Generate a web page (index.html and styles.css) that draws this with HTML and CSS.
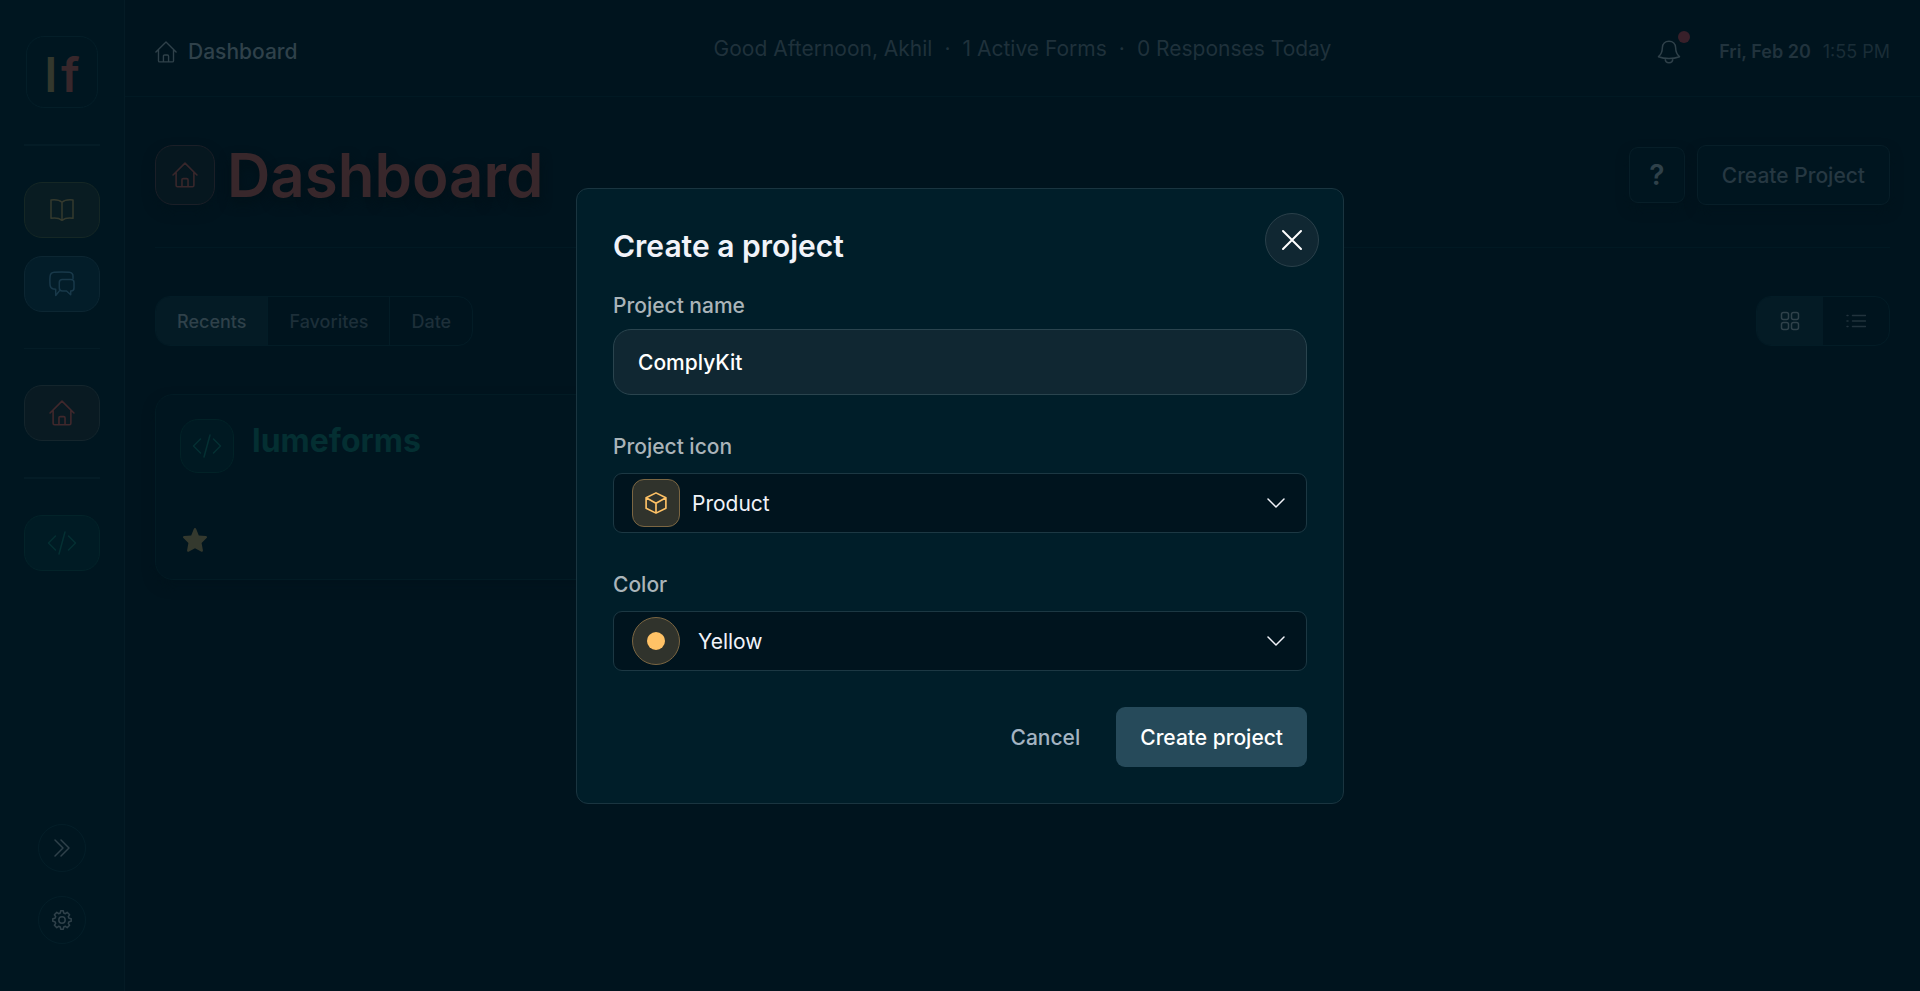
FILE: index.html
```html
<!DOCTYPE html>
<html lang="en">
<head>
    <meta charset="UTF-8">
    <meta name="viewport" content="width=device-width, initial-scale=1.0">
    <title>Dashboard</title>
    <link rel="stylesheet" href="styles.css">
</head>
<body>

    <!-- Shared icons -->
    <svg class="sprite" aria-hidden="true">
        <symbol id="i-home" viewBox="0 0 24 24">
            <path d="M1 12 12 1l11 11M3.800 9.800v11.700c0 .9.500 1.300 1.300 1.300h13.800c.8 0 1.300-.4 1.300-1.300V9.800M9.200 22.800v-6.200c0-.9.400-1.300 1.300-1.300h3c.9 0 1.300.4 1.300 1.300v6.200"/>
        </symbol>
        <symbol id="i-book" viewBox="0 0 24 24">
            <path d="M12 4.300C9.500 2 5.500 1.500 1 2v18.300c4.500-.6 8.500 0 11 2 2.500-2 6.500-2.600 11-2V2c-4.500-.5-8.500 0-11 2.300zM12 4.300v18"/>
        </symbol>
        <symbol id="i-chat" viewBox="0 0 26 26">
            <path d="M24 7.500V5.300c0-2.500-1.500-3.800-3.800-4C15.500.9 9.800.9 5.200 1.300 2.600 1.500 1.300 3 1.100 5.200c-.3 3.200-.3 6.300 0 9.200.2 2 1.500 3.200 3.400 3.500l2.200.3v6.300l4.300-5.400"/>
            <path d="M13.300 8.500h8.700c1.900 0 3 1.200 3 3v5.500c0 2-1.100 3-3 3h-.300v3.800L17.500 20h-4.200c-1.900 0-3-1-3-3v-5.500c0-1.800 1.100-3 3-3z"/>
        </symbol>
        <symbol id="i-code" viewBox="0 0 30 24">
            <path d="M8.500 5 1.500 12l7 7M21.500 5l7 7-7 7M18 1l-6 22"/>
        </symbol>
        <symbol id="i-chevron" viewBox="0 0 20 20">
            <path d="m2 6 8 8 8-8"/>
        </symbol>
    </svg>

    <div class="app">
        <nav class="sidebar" aria-label="Main">
            <a class="logo" href="#"><span class="logo-l">l</span><span class="logo-f">f</span></a>
            <div class="divider thick"></div>
            <div class="nav-group">
                <a class="nav-item guide" href="#" aria-label="Guide"><svg class="icon"><use href="#i-book"/></svg></a>
                <a class="nav-item chat" href="#" aria-label="Chat"><svg class="icon icon-lg"><use href="#i-chat"/></svg></a>
            </div>
            <div class="divider"></div>
            <a class="nav-item home" href="#" aria-label="Home"><svg class="icon icon-lg"><use href="#i-home"/></svg></a>
            <div class="divider thick"></div>
            <a class="nav-item project" href="#" aria-label="lumeforms"><svg class="icon icon-code"><use href="#i-code"/></svg></a>
            <div class="sidebar-bottom">
                <button class="round-btn" type="button" aria-label="Expand">
                    <svg class="icon-sm" viewBox="0 0 20 20"><path d="m3 2 8 8-8 8M9 2l8 8-8 8"/></svg>
                </button>
                <button class="round-btn" type="button" aria-label="Settings">
                    <svg class="icon-sm" viewBox="0 0 20 20"><path d="M8.300 3 8.700.8h2.600l.4 2.200 1.700.7L15.200 2.400l2.400 2.400-1.300 1.800.7 1.700 2.200.4v2.600l-2.200.4-.7 1.700 1.300 1.800-2.400 2.400-1.800-1.300-1.700.7-.4 2.200H8.700l-.4-2.200-1.700-.7-1.800 1.300-2.400-2.400 1.300-1.800-.7-1.700-2.200-.4V8.700l2.200-.4.7-1.700-1.300-1.800 2.400-2.400 1.800 1.300z"/><circle cx="10" cy="10" r="3.200"/></svg>
                </button>
            </div>
        </nav>

        <div class="main">
            <header class="topbar">
                <div class="crumb">
                    <svg class="icon-crumb"><use href="#i-home"/></svg>
                    <span>Dashboard</span>
                </div>
                <div class="greeting">
                    <span>Good Afternoon, Akhil</span><span>·</span><span>1 Active Forms</span><span>·</span><span>0 Responses Today</span>
                </div>
                <div class="topbar-right">
                    <button class="bell" type="button" aria-label="Notifications">
                        <svg class="icon" viewBox="0 0 24 24"><path d="M12 1.200c-4 0-6.500 2.800-6.600 6.300-.1 4-.9 6.700-3.900 9.200 3.200 1.200 6.800 1.800 10.500 1.800s7.300-.6 10.500-1.800c-3-2.500-3.800-5.200-3.900-9.200-.1-3.500-2.600-6.300-6.600-6.300zM8.200 18.500c0 2.700 1.500 4.300 3.800 4.300s3.800-1.600 3.800-4.300"/></svg>
                        <span class="bell-dot"></span>
                    </button>
                    <div class="datetime">
                        <span class="date">Fri, Feb 20</span>
                        <span class="time">1:55 PM</span>
                    </div>
                </div>
            </header>

            <main class="content">
                <div class="page-head">
                    <div class="page-title">
                        <span class="title-icon"><svg class="icon icon-lg"><use href="#i-home"/></svg></span>
                        <h1>Dashboard</h1>
                    </div>
                    <div class="page-actions">
                        <button class="help-btn" type="button">?</button>
                        <button class="create-btn" type="button">Create Project</button>
                    </div>
                </div>

                <div class="toolbar">
                    <div class="tabs">
                        <button class="tab active" type="button">Recents</button>
                        <button class="tab" type="button">Favorites</button>
                        <button class="tab" type="button">Date</button>
                    </div>
                    <div class="view-toggle">
                        <button class="view active" type="button" aria-label="Grid view">
                            <svg class="icon-sm" viewBox="0 0 20 20"><rect x="1.500" y="1.500" width="7" height="7" rx="2"/><rect x="11.500" y="1.500" width="7" height="7" rx="2"/><rect x="1.500" y="11.500" width="7" height="7" rx="2"/><rect x="11.500" y="11.500" width="7" height="7" rx="2"/></svg>
                        </button>
                        <button class="view" type="button" aria-label="List view">
                            <svg class="icon-sm" viewBox="0 0 20 20"><path d="M6.500 4.500h13M6.500 10h13M6.500 15.500h13M1 4.500h1M1 10h1M1 15.500h1"/></svg>
                        </button>
                    </div>
                </div>

                <div class="projects">
                    <article class="card">
                        <div class="card-head">
                            <span class="card-icon"><svg class="icon icon-code"><use href="#i-code"/></svg></span>
                            <h2>lumeforms</h2>
                        </div>
                        <button class="star" type="button" aria-label="Favorite">
                            <svg viewBox="0 0 24 24"><path d="M12 0c.6 0 1 .4 1.200.9l2.600 6.600 7 .5c1.200.1 1.600 1.300.8 2.100l-5 4.900 1.300 7.300c.2 1.200-.9 1.900-1.900 1.300L12 20.300l-6 3.300c-1 .6-2.100-.1-1.900-1.300l1.300-7.300-5-4.900C-.4 9.300 0 8.100 1.200 8l7-.5L10.800.9C11 .4 11.400 0 12 0z"/></svg>
                        </button>
                    </article>
                </div>
            </main>
        </div>
    </div>

    <!-- Create project modal -->
    <div class="overlay">
        <form class="modal" role="dialog" aria-labelledby="modal-title">
            <h2 class="modal-title" id="modal-title">Create a project</h2>
            <button class="close-btn" type="button" aria-label="Close">
                <svg viewBox="0 0 22 22"><path d="m2 2 18 18M20 2 2 20"/></svg>
            </button>

            <div class="field">
                <label for="project-name">Project name</label>
                <input id="project-name" type="text" value="ComplyKit">
            </div>

            <div class="field select-field">
                <label for="project-icon">Project icon</label>
                <div class="select-box">
                    <span class="chip"><svg viewBox="0 0 20 20"><path d="M10 .8 19 5.300v9.400l-9 4.500-9-4.500V5.300zM1 5.300l9 5 9-5M10 10.300v8.900"/></svg></span>
                    <select id="project-icon">
                        <option>Product</option>
                    </select>
                    <svg class="chevron"><use href="#i-chevron"/></svg>
                </div>
            </div>

            <div class="field select-field">
                <label for="project-color">Color</label>
                <div class="select-box color-box">
                    <span class="chip round"><span class="swatch"></span></span>
                    <select id="project-color">
                        <option>Yellow</option>
                    </select>
                    <svg class="chevron"><use href="#i-chevron"/></svg>
                </div>
            </div>

            <div class="modal-actions">
                <button class="cancel-btn" type="button">Cancel</button>
                <button class="submit-btn" type="submit">Create project</button>
            </div>
        </form>
    </div>

</body>
</html>
```
FILE: styles.css
```css
* {
    box-sizing: border-box;
    margin: 0;
    padding: 0;
}

body {
    min-height: 100vh;
    font-family: 'Inter', sans-serif;
    font-size: 21px;
    line-height: 30px;
    color: #2f414a;
    background: #00141e;
    overflow: hidden;
}

button, input, select {
    font: inherit;
    line-height: normal;
    color: inherit;
    background: none;
    border: none;
}

button {
    cursor: pointer;
}

a {
    text-decoration: none;
}

svg {
    display: block;
    fill: none;
    stroke: currentColor;
    stroke-width: 1.5;
    stroke-linecap: round;
    stroke-linejoin: round;
}

.sprite {
    position: absolute;
    width: 0;
    height: 0;
}

.icon {
    width: 24px;
    height: 24px;
}

.icon-sm {
    width: 20px;
    height: 20px;
}

.icon-crumb {
    width: 22px;
    height: 22px;
}

.icon-lg {
    width: 26px;
    height: 26px;
}

.icon-code {
    width: 30px;
    height: 24px;
}

.app {
    display: flex;
    min-height: 100vh;
}

/* Sidebar */
.sidebar {
    width: 125px;
    padding: 36px 24px 47px;
    display: flex;
    flex-direction: column;
    align-items: center;
    gap: 36px;
    background: #001620;
    border-right: 1px solid #041b25;
}

.logo {
    width: 72px;
    height: 72px;
    padding-top: 6px;
    display: flex;
    justify-content: center;
    align-items: center;
    gap: 4px;
    border: 1px solid #041e28;
    border-radius: 18px;
    font-size: 48px;
    font-weight: 600;
}

.logo-l {
    color: #33382d;
}

.logo-f {
    color: #38272b;
}

.divider {
    width: 100%;
    height: 1px;
    background: #041c26;
}

.divider.thick {
    height: 2px;
}

.nav-group {
    width: 100%;
    display: flex;
    flex-direction: column;
    gap: 18px;
}

.nav-item {
    width: 100%;
    height: 56px;
    display: flex;
    justify-content: center;
    align-items: center;
    border: 1px solid;
    border-radius: 18px;
}

.guide {
    color: #353a2e;
    background: #091c22;
    border-color: #152725;
}

.chat {
    color: #19394a;
    background: #031d29;
    border-color: #0c2632;
}

.home {
    color: #40282c;
    background: #091a22;
    border-color: #14252c;
}

.project {
    color: #043033;
    background: #001b24;
    border-color: #032329;
}

.sidebar-bottom {
    margin-top: auto;
    display: flex;
    flex-direction: column;
    gap: 24px;
}

.round-btn {
    width: 48px;
    height: 48px;
    display: flex;
    justify-content: center;
    align-items: center;
    border: 1px solid #041e28;
    border-radius: 50%;
}

/* Top bar */
.main {
    flex: 1;
    min-width: 0;
}

.topbar {
    height: 97px;
    padding: 2px 30px 0;
    display: grid;
    grid-template-columns: 1fr auto 1fr;
    align-items: center;
    border-bottom: 1px solid #011923;
}

.crumb {
    padding-top: 6px;
    display: flex;
    align-items: center;
    gap: 11px;
    font-weight: 500;
}

.greeting {
    display: flex;
    gap: 12px;
    color: #1f313b;
}

.topbar-right {
    padding-top: 6px;
    display: flex;
    justify-content: flex-end;
    align-items: center;
    gap: 38px;
}

.bell {
    position: relative;
}

.bell-dot {
    position: absolute;
    top: -9px;
    right: -9px;
    width: 12px;
    height: 12px;
    border-radius: 50%;
    background: #38202a;
}

.datetime {
    display: flex;
    gap: 12px;
    font-size: 18px;
}

.date {
    font-weight: 600;
    color: #21333d;
}

.time {
    color: #1a2d37;
}

/* Page content */
.content {
    padding: 48px 30px;
}

.page-head {
    padding-bottom: 42px;
    display: flex;
    justify-content: space-between;
    align-items: center;
    border-bottom: 1px solid #011923;
}

.page-title {
    height: 60px;
    display: flex;
    align-items: center;
    gap: 12px;
    color: #38272b;
}

.title-icon {
    width: 60px;
    height: 60px;
    display: flex;
    justify-content: center;
    align-items: center;
    background: #06171f;
    border: 1px solid #1b1f27;
    border-radius: 18px;
    box-shadow: 0 6px 12px #00131c;
}

h1 {
    font-size: 60px;
    line-height: 60px;
    font-weight: 600;
    text-shadow: 0 6px 12px #001017;
}

.page-actions {
    display: flex;
    align-items: center;
    gap: 12px;
}

.help-btn, .create-btn {
    background: #00151f;
    border: 1px solid #071e28;
    border-radius: 9px;
    box-shadow: 0 6px 12px #00131c;
}

.help-btn {
    width: 56px;
    height: 56px;
    font-size: 28px;
    font-weight: 600;
}

.create-btn {
    height: 60px;
    padding: 0 24px;
    font-weight: 500;
    color: #263842;
}

.toolbar {
    margin-top: 48px;
    display: flex;
    justify-content: space-between;
}

.tabs, .view-toggle {
    height: 50px;
    display: flex;
    border: 1px solid #031c26;
    border-radius: 15px;
    overflow: hidden;
}

.tab {
    padding: 0 21px;
    font-size: 18px;
    font-weight: 500;
    color: #1d2f39;
}

.tab + .tab {
    border-left: 1px solid #031c26;
}

.view {
    width: 66px;
    display: flex;
    justify-content: center;
    align-items: center;
    color: #21333d;
}

.tab.active, .view.active {
    color: #2f414a;
    background: #041b25;
}

.projects {
    margin-top: 48px;
    display: grid;
    grid-template-columns: repeat(3, 1fr);
    gap: 24px;
}

.card {
    padding: 24px;
    min-height: 186px;
    display: flex;
    flex-direction: column;
    justify-content: space-between;
    align-items: flex-start;
    background: #00151f;
    border: 1px solid #021b24;
    border-radius: 18px;
    box-shadow: 0 6px 12px #00131c;
}

.card-head {
    display: flex;
    gap: 18px;
}

.card-icon {
    width: 54px;
    height: 54px;
    display: flex;
    justify-content: center;
    align-items: center;
    color: #043033;
    background: #001922;
    border: 1px solid #022227;
    border-radius: 18px;
}

.card h2 {
    font-size: 32px;
    line-height: 44px;
    font-weight: 700;
    color: #042f32;
}

.star {
    width: 30px;
    height: 30px;
    display: flex;
    justify-content: center;
    align-items: center;
    color: #34392e;
}

.star svg {
    width: 24px;
    height: 24px;
    fill: currentColor;
    stroke: none;
}

/* Modal */
.overlay {
    position: fixed;
    inset: 0;
    display: flex;
    justify-content: center;
    align-items: center;
}

.modal {
    position: relative;
    width: 768px;
    max-width: 100%;
    padding: 36px;
    background: #001e29;
    border: 1px solid #1a3540;
    border-radius: 12px;
    color: #f1f3f9;
}

.modal-title {
    margin-bottom: 24px;
    font-size: 30px;
    line-height: 42px;
    font-weight: 600;
}

.close-btn {
    position: absolute;
    top: 24px;
    right: 24px;
    width: 54px;
    height: 54px;
    display: flex;
    justify-content: center;
    align-items: center;
    color: #fff;
    background: #102732;
    border: 1px solid #2a404a;
    border-radius: 50%;
}

.close-btn svg {
    width: 22px;
    height: 22px;
    stroke-width: 2;
}

.field {
    display: flex;
    flex-direction: column;
    gap: 8px;
}

.select-field {
    margin-top: 37px;
    gap: 11px;
}

.field label {
    font-weight: 500;
    color: #aab4b9;
}

.field input {
    width: 100%;
    height: 66px;
    padding: 2px 24px 0;
    font-weight: 500;
    color: #fff;
    background: #102732;
    border: 1px solid #2a444e;
    border-radius: 18px;
}

.select-box {
    height: 60px;
    padding: 0 20px 0 18px;
    display: flex;
    align-items: center;
    gap: 12px;
    background: #00141e;
    border: 1px solid #1c3843;
    border-radius: 9px;
}

.color-box {
    gap: 18px;
}

.select-box select {
    flex: 1;
    height: 100%;
    padding-top: 2px;
    appearance: none;
}

.chip {
    width: 48px;
    height: 48px;
    display: flex;
    justify-content: center;
    align-items: center;
    color: #ffc266;
    background: #30332c;
    border: 1px solid #7b6642;
    border-radius: 12px;
}

.chip svg {
    width: 22px;
    height: 22px;
}

.chip.round {
    border-radius: 50%;
}

.swatch {
    width: 18px;
    height: 18px;
    border-radius: 50%;
    background: #ffc266;
}

.chevron {
    width: 20px;
    height: 20px;
}

.modal-actions {
    margin-top: 36px;
    display: flex;
    justify-content: flex-end;
    gap: 12px;
}

.cancel-btn, .submit-btn {
    height: 60px;
    padding: 2px 24px 0;
    font-weight: 500;
    border-radius: 9px;
}

.cancel-btn {
    color: #a4b4c2;
}

.submit-btn {
    color: #fff;
    background: #264a5a;
}
```
